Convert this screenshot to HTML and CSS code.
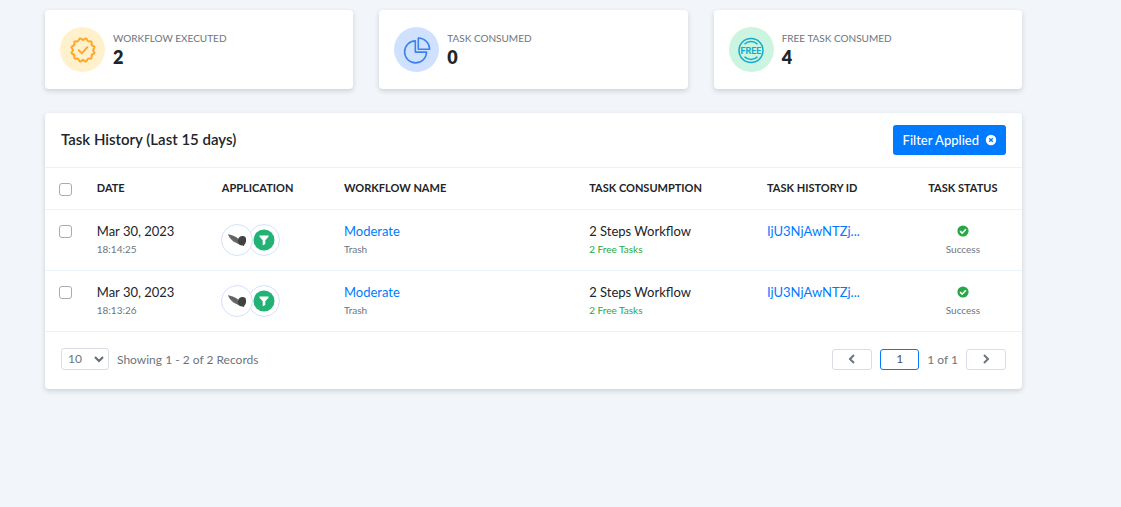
FILE: index.html
```html
<!DOCTYPE html>
<html lang="en">
<head>
<meta charset="utf-8">
<meta name="viewport" content="width=device-width, initial-scale=1">
<title>Task History</title>
<link rel="stylesheet" href="styles.css">
</head>
<body>
<svg class="sprite" aria-hidden="true">
  <symbol id="leaf" viewBox="0 0 20 14">
    <path d="M1 1.300c4 .8 8.500 2.500 11 5l-1 4.500C6.500 9.300 2.800 6.300 1 1.300z" fill="#6c6c6c"/>
    <path d="M1.500 1.600l10 7M5 2.700l1.500 3M8 4l1.200 4" fill="none" stroke="#555" stroke-width=".6"/>
    <path d="M11 7c.5-3 2.300-4.100 4.600-4 2.500 0 3.700 1.600 3.500 4.200-.1 2.300-1 4.300-2.100 4.700l.2 1.400-1.600-.9c-2 .2-4.500-1.200-4.800-2.400z" fill="#424242"/>
  </symbol>
  <symbol id="funnel" viewBox="0 0 22 22">
    <circle cx="11" cy="11" r="10.500" fill="#22b276"/>
    <path d="M6.500 6.500h9v1.200l-3.200 3.600v3.700l-2.600 1.300v-5L6.500 7.700z" fill="#fff"/>
  </symbol>
  <symbol id="success" viewBox="0 0 12 12">
    <circle cx="6" cy="6" r="5.600" fill="#28a745"/>
    <path d="M3.100 6.200l2.100 2 3.700-4" fill="none" stroke="#fff" stroke-width="1.600"/>
  </symbol>
</svg>

<main class="page">
  <section class="stats">
    <article class="card stat">
      <span class="stat-icon stat-icon-yellow">
        <svg viewBox="-14 -14 28 28" width="28" height="28" fill="none" stroke="#ffa72b" stroke-width="2" stroke-linecap="round" stroke-linejoin="round">
          <path d="M10.880-1.660Q9.400 0 10.880 1.660T10.250 4.010T8.600 6.880T6.880 8.600T4.010 10.250T1.660 10.880T-1.660 10.880T-4.010 10.250T-6.880 8.600T-8.600 6.880T-10.250 4.010T-10.880 1.660T-10.880-1.660T-10.250-4.010T-8.600-6.880T-6.880-8.600T-4.010-10.250T-1.660-10.880T1.660-10.880T4.010-10.250T6.880-8.600T8.600-6.880T10.250-4.010T10.880-1.660z"/>
          <path d="M-4.200.2l3 3.200 5.600-6.200"/>
        </svg>
      </span>
      <div class="stat-text">
        <h3 class="stat-label">WORKFLOW EXECUTED</h3>
        <p class="stat-value">2</p>
      </div>
    </article>
    <article class="card stat">
      <span class="stat-icon stat-icon-blue">
        <svg viewBox="0 0 28 28" width="28" height="28" fill="none" stroke="#3b82ee" stroke-width="1.600" stroke-linejoin="round">
          <path d="M12.300 4.900A11 11 0 1 0 23.600 16.100H12.300z"/>
          <path d="M15.300 2v11.200h11.300A11.300 11.300 0 0 0 15.300 2z"/>
        </svg>
      </span>
      <div class="stat-text">
        <h3 class="stat-label">TASK CONSUMED</h3>
        <p class="stat-value">0</p>
      </div>
    </article>
    <article class="card stat">
      <span class="stat-icon stat-icon-green">
        <svg viewBox="0 0 28 28" width="28" height="28" fill="none" stroke="#14aacb" stroke-width="1.500">
          <circle cx="14" cy="14.500" r="12"/>
          <path d="M7.500 8.200a9.200 9.200 0 0 1 13 0M7.500 20.800a9.200 9.200 0 0 0 13 0"/>
          <text class="free-text" x="14" y="18" text-anchor="middle">FREE</text>
        </svg>
      </span>
      <div class="stat-text">
        <h3 class="stat-label">FREE TASK CONSUMED</h3>
        <p class="stat-value">4</p>
      </div>
    </article>
  </section>

  <section class="card">
    <header class="panel-head">
      <h2 class="panel-title">Task History (Last 15 days)</h2>
      <button class="filter" type="button">Filter Applied
        <svg viewBox="0 0 12 12" width="12" height="12"><circle cx="6" cy="6" r="5.200" fill="#fff"/><path d="M4.200 4.200l3.600 3.600M7.800 4.200L4.200 7.800" stroke="#007bff" stroke-width="1.400"/></svg>
      </button>
    </header>

    <table class="history">
      <colgroup>
        <col class="c-check"><col class="c-date"><col class="c-app"><col class="c-name"><col class="c-use"><col class="c-id"><col class="c-status">
      </colgroup>
      <thead>
        <tr>
          <th class="pick"><input type="checkbox" aria-label="Select all"></th>
          <th>DATE</th>
          <th>APPLICATION</th>
          <th>WORKFLOW NAME</th>
          <th>TASK CONSUMPTION</th>
          <th>TASK HISTORY ID</th>
          <th class="status">TASK STATUS</th>
        </tr>
      </thead>
      <tbody>
        <tr>
          <td class="pick"><input type="checkbox" aria-label="Select task 18:14:25"></td>
          <td>Mar 30, 2023<small>18:14:25</small></td>
          <td><div class="apps"><span class="app app-front"><svg width="20" height="14"><use href="#leaf"/></svg></span><span class="app"><svg width="22" height="22"><use href="#funnel"/></svg></span></div></td>
          <td><a href="#">Moderate</a><small>Trash</small></td>
          <td>2 Steps Workflow<small class="free">2 Free Tasks</small></td>
          <td><a href="#">IjU3NjAwNTZj...</a></td>
          <td class="status"><svg class="tick" width="12" height="12"><use href="#success"/></svg><small>Success</small></td>
        </tr>
        <tr>
          <td class="pick"><input type="checkbox" aria-label="Select task 18:13:26"></td>
          <td>Mar 30, 2023<small>18:13:26</small></td>
          <td><div class="apps"><span class="app app-front"><svg width="20" height="14"><use href="#leaf"/></svg></span><span class="app"><svg width="22" height="22"><use href="#funnel"/></svg></span></div></td>
          <td><a href="#">Moderate</a><small>Trash</small></td>
          <td>2 Steps Workflow<small class="free">2 Free Tasks</small></td>
          <td><a href="#">IjU3NjAwNTZj...</a></td>
          <td class="status"><svg class="tick" width="12" height="12"><use href="#success"/></svg><small>Success</small></td>
        </tr>
      </tbody>
    </table>

    <footer class="panel-foot">
      <select class="size" aria-label="Records per page"><option>10</option><option>25</option><option>50</option></select>
      <span class="note">Showing 1 - 2 of 2 Records</span>
      <nav class="pager" aria-label="Pages">
        <button class="step" type="button" aria-label="Previous page"><svg viewBox="0 0 8 10" width="8" height="10"><path d="M6 1L2 5l4 4"/></svg></button>
        <input class="page-no" type="text" value="1" aria-label="Page number">
        <span class="note">1 of 1</span>
        <button class="step" type="button" aria-label="Next page"><svg viewBox="0 0 8 10" width="8" height="10"><path d="M2 1l4 4-4 4"/></svg></button>
      </nav>
    </footer>
  </section>
</main>
</body>
</html>
```
FILE: styles.css
```css
* { box-sizing: border-box; }

body {
  margin: 0;
  background: #f2f6fa;
  color: #212529;
  font: 13px/18px Lato, "Open Sans", sans-serif;
}

h2, h3, p { margin: 0; }
a { color: #007bff; text-decoration: none; }
button, input, select { font: inherit; }

.sprite { display: none; }

.page {
  display: grid;
  gap: 24px;
  padding: 10px 99px 24px 45px;
}

.card {
  background: #fff;
  border-radius: 4px;
  box-shadow: 0 2px 5px rgba(40, 60, 80, .2);
}

.stats {
  display: grid;
  grid-template-columns: repeat(3, 1fr);
  gap: 26px;
}

.stat {
  display: flex;
  align-items: center;
  gap: 8px;
  padding: 17px 15px;
}

.stat-icon {
  display: grid;
  place-items: center;
  width: 45px;
  height: 45px;
  border-radius: 50%;
}
.stat-icon-yellow { background: #fff1cc; }
.stat-icon-blue { background: #cfe1ff; }
.stat-icon-green { background: #cbf4e1; }

.free-text {
  font: 700 9px Roboto, sans-serif;
  fill: #14aacb;
  stroke: none;
}

.stat-text { padding-bottom: 2px; }
.stat-label {
  color: #6c757d;
  font-size: 10px;
  font-weight: 400;
  line-height: 16px;
}
.stat-value {
  font-size: 18px;
  font-weight: 800;
  line-height: 22px;
}

.panel-head {
  display: flex;
  align-items: center;
  justify-content: space-between;
  padding: 12px 16px;
}
.panel-title {
  padding-bottom: 2px;
  font-size: 15px;
  font-weight: 600;
}

.filter {
  display: flex;
  align-items: center;
  gap: 6px;
  height: 30px;
  padding: 0 9px 0 10px;
  border: 0;
  border-radius: 3px;
  background: #007bff;
  color: #fff;
  font-weight: 500;
}

.history {
  width: 100%;
  border-collapse: collapse;
  table-layout: fixed;
}
.c-check { width: 5.3%; }
.c-date { width: 12.8%; }
.c-app { width: 12.5%; }
.c-name { width: 25.1%; }
.c-use { width: 18.2%; }
.c-id { width: 14%; }
.c-status { width: 12.1%; }

.history tr {
  border-top: 1px solid #eaf3fc;
  border-bottom: 1px solid #eaf3fc;
}
.history th {
  padding: 10px 0 12px;
  font-size: 11px;
  font-weight: 700;
  text-align: left;
}
.history td {
  padding: 12px 0;
  vertical-align: top;
}
.history small {
  display: block;
  color: #6c757d;
  font-size: 10px;
}
.history .free { color: #28a745; }
.history .status { text-align: center; }
.history .pick { padding-left: 14px; }
.history thead .pick {
  padding-top: 12px;
  padding-bottom: 10px;
}

.pick input {
  appearance: none;
  display: block;
  width: 13px;
  height: 13px;
  margin: 3px 0;
  border: 1px solid #a4adb5;
  border-radius: 3px;
  background: #fff;
}

.apps {
  display: flex;
  padding: 2px 0;
}
.app {
  display: grid;
  place-items: center;
  width: 32px;
  height: 32px;
  margin-left: -5px;
  border: 1px solid #d5e2fb;
  border-radius: 50%;
  background: #fff;
}
.app-front {
  z-index: 1;
  margin-left: -1px;
}

.tick {
  display: block;
  margin: 3px auto;
}

.panel-foot {
  display: flex;
  align-items: center;
  gap: 8px;
  padding: 16px 16px 19px;
  color: #6c757d;
  font-size: 12px;
}
.note { padding-top: 2px; }

.size {
  appearance: none;
  width: 48px;
  height: 22px;
  padding: 0 6px;
  border: 1px solid #dcdce4;
  border-radius: 3px;
  background: #fff url("data:image/svg+xml,%3Csvg xmlns='http://www.w3.org/2000/svg' width='10' height='7'%3E%3Cpath d='M1 1l4 4 4-4' fill='none' stroke='%23636b73' stroke-width='2'/%3E%3C/svg%3E") no-repeat right 4px center;
  color: #6c757d;
}

.pager {
  display: flex;
  align-items: center;
  gap: 8px;
  margin-left: auto;
}
.step {
  display: grid;
  place-items: center;
  width: 40px;
  height: 21px;
  padding: 0;
  border: 1px solid #dcdce8;
  border-radius: 3px;
  background: #fff;
}
.step path {
  fill: none;
  stroke: #6c757d;
  stroke-width: 2;
}
.page-no {
  width: 39px;
  height: 21px;
  padding: 0 0 2px;
  border: 1px solid #007bff;
  border-radius: 3px;
  background: #fff;
  color: #495057;
  text-align: center;
}
```
